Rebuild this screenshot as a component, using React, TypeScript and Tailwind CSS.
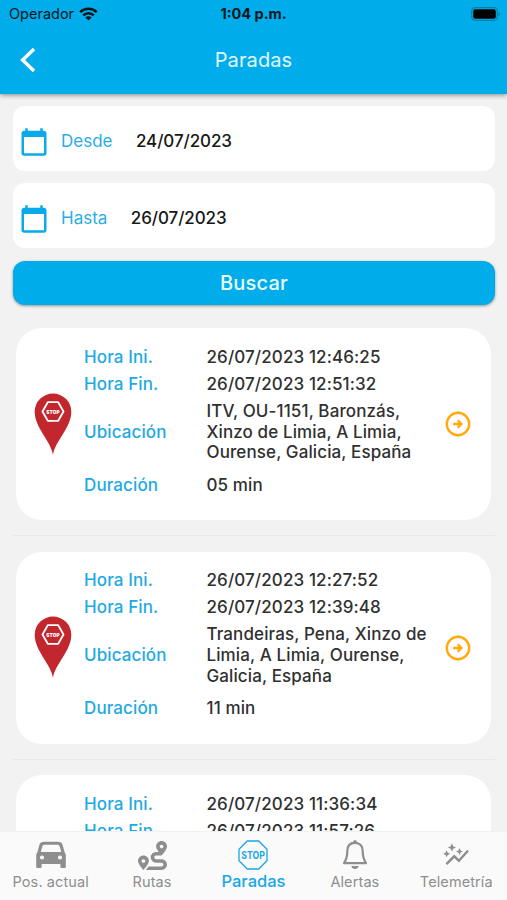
import React from 'react';
import { FaRoute } from 'react-icons/fa';
import { MdAutoGraph, MdCalendarToday } from 'react-icons/md';

interface Stop {
  start: string;
  end: string;
  location: string[];
  duration: string;
}

const stops: Stop[] = [
  {
    start: '26/07/2023 12:46:25',
    end: '26/07/2023 12:51:32',
    location: ['ITV, OU-1151, Baronzás,', 'Xinzo de Limia, A Limia,', 'Ourense, Galicia, España'],
    duration: '05 min',
  },
  {
    start: '26/07/2023 12:27:52',
    end: '26/07/2023 12:39:48',
    location: ['Trandeiras, Pena, Xinzo de', 'Limia, A Limia, Ourense,', 'Galicia, España'],
    duration: '11 min',
  },
  {
    start: '26/07/2023 11:36:34',
    end: '26/07/2023 11:57:26',
    location: [],
    duration: '',
  },
];

const WifiIcon = () => (
  <svg width="19" height="14" viewBox="0 0 19 14" fill="none" stroke="#06151c" strokeWidth="2.5">
    <path d="M1.2 5.1C5.8.6 13.2.6 17.8 5.1" />
    <path d="M4.2 8.3c3-2.9 7.6-2.9 10.6 0" />
    <path d="M9.5 13.6L6.4 10.5c1.8-1.7 4.4-1.7 6.2 0z" fill="#06151c" stroke="none" />
  </svg>
);

const BatteryIcon = () => (
  <svg width="30" height="14" viewBox="0 0 30 14">
    <rect x=".7" y=".7" width="25.6" height="12.6" rx="3.6" fill="none" stroke="#0780a9" strokeWidth="1.3" />
    <rect x="2.2" y="2.2" width="22.6" height="9.6" rx="2.2" fill="#000" />
    <path d="M27.5 4.8c2 .9 2 3.5 0 4.4z" fill="#0780a9" />
  </svg>
);

const PinIcon = () => (
  <svg width="38" height="63" viewBox="0 0 38 63">
    <path d="M19 62C17 48 .7 35 .7 18.8a18.3 18.3 0 0 1 36.6 0C37.3 35 21 48 19 62z" fill="#c1272d" />
    <path d="M13.8 9.2h10.4l5.3 9.3-5.3 9.3H13.8l-5.3-9.3z" fill="none" stroke="#fff" strokeWidth="1.8" strokeLinejoin="round" />
    <text x="19" y="20.5" textAnchor="middle" fontSize="5.4" fontWeight="900" fill="#fff" textLength="13.5" lengthAdjust="spacingAndGlyphs" className="font-[Inter]">STOP</text>
  </svg>
);

const ArrowCircleIcon = () => (
  <svg width="26" height="26" viewBox="0 0 26 26" fill="none" stroke="#ffab0f" strokeWidth="2.4">
    <circle cx="13" cy="13" r="11.2" />
    <path d="M8.2 13h7.8M12.7 9.3l3.7 3.7-3.7 3.7" />
  </svg>
);

const CarIcon = () => (
  <svg width="32" height="28" viewBox="0 0 32 28">
    <path
      fillRule="evenodd"
      fill="#8e8e8e"
      d="M9.5.8h13c3 0 4.5 1 5.2 3.4l2.1 7.6c.7.6 1 1.4 1 2.4v11.2c0 1-.7 1.7-1.7 1.7h-2c-1 0-1.700-.7-1.700-1.700v-2.500H6.600v2.500c0 1-.7 1.700-1.700 1.700h-2c-1 0-1.700-.7-1.700-1.700V14.200c0-1 .3-1.800 1-2.400l2.100-7.600C5 1.800 6.500.8 9.500.8zM10 3.700c-1.700 0-2.300.5-2.700 1.900l-1.500 5.300h20.400l-1.500-5.300c-.4-1.400-1-1.900-2.700-1.900zM7 14.400a2.100 2.100 0 1 0 0 4.200 2.100 2.100 0 0 0 0-4.200zM25 14.400a2.100 2.100 0 1 0 0 4.200 2.100 2.100 0 0 0 0-4.200z"
    />
  </svg>
);

const StopSignIcon = () => (
  <svg width="30" height="30" viewBox="0 0 30 30">
    <path d="M9.3 1h11.4L29 9.3v11.4L20.7 29H9.3L1 20.7V9.3z" fill="none" stroke="#16a8e6" strokeWidth="1.3" />
    <text x="15" y="18.9" textAnchor="middle" fontSize="10.8" fontWeight="700" fill="#16a8e6" textLength="23.5" lengthAdjust="spacingAndGlyphs" className="font-[Inter]">STOP</text>
  </svg>
);

const BellIcon = () => (
  <svg width="26" height="30" viewBox="0 0 26 30">
    <path
      d="M13 2.8c-5 0-7.7 3.3-7.7 8.3 0 5.8-.9 8.6-3.3 12.1h22c-2.4-3.5-3.3-6.3-3.3-12.1 0-5-2.7-8.3-7.7-8.3z"
      fill="none"
      stroke="#8e8e8e"
      strokeWidth="2.2"
      strokeLinejoin="round"
    />
    <path d="M11.2 3V1.5c0-1.8 3.6-1.8 3.6 0V3zM9.3 26h7.4c-.6 4-6.8 4-7.4 0z" fill="#8e8e8e" />
  </svg>
);

const DateField = ({ label, value }: { label: string; value: string }) => (
  <div className="flex h-[65px] items-center rounded-xl bg-white pl-1.5 pt-1.5">
    <MdCalendarToday size={30} color="#08aaea" />
    <span className="ml-3 pt-px text-[17px] text-[#28aee6]">{label}</span>
    <span className="ml-[23.5px] pt-px text-[17px] font-medium tracking-[-0.1px] text-[#171717]">{value}</span>
  </div>
);

const StopCard = ({ stop }: { stop: Stop }) => (
  <div className="ml-[3px] mr-1 flex h-[192px] shrink-0 rounded-[26px] bg-white pt-[15.5px] text-[17px] tracking-[0.11px]">
    <div className="w-[68px] pl-[18px] pt-[49px]">
      <PinIcon />
    </div>
    <div className="flex w-[122.5px] flex-col font-medium text-[#1daae3]">
      <span className="h-[27px] leading-[27px]">Hora Ini.</span>
      <span className="h-[27px] leading-[27px]">Hora Fin.</span>
      <span className="h-[69px] leading-[68px]">Ubicación</span>
      <span className="leading-[37px]">Duración</span>
    </div>
    <div className="flex w-[238.5px] flex-col font-medium text-[#303030]">
      <span className="h-[27px] leading-[27px]">{stop.start}</span>
      <span className="h-[27px] leading-[27px]">{stop.end}</span>
      <div className="flex h-[69px] flex-col justify-center leading-[20.7px]">
        {stop.location.map((line) => (
          <span key={line} className="whitespace-nowrap">{line}</span>
        ))}
      </div>
      <span className="leading-[37px]">{stop.duration}</span>
    </div>
    <div className="pt-[67.5px]">
      <ArrowCircleIcon />
    </div>
  </div>
);

const tabs = [
  { label: 'Pos. actual', icon: <CarIcon /> },
  { label: 'Rutas', icon: <FaRoute size={29} /> },
  { label: 'Paradas', icon: <StopSignIcon />, active: true },
  { label: 'Alertas', icon: <BellIcon /> },
  { label: 'Telemetría', icon: <MdAutoGraph size={28} /> },
];

export default function App() {
  return (
    <div className="flex h-[900px] w-[507px] flex-col overflow-hidden bg-[#f2f2f2] font-[Inter,sans-serif]">
      <header className="z-10 flex h-[94px] shrink-0 flex-col bg-[#00adea] shadow-[0_1px_5px_rgba(0,0,0,0.45)]">
        <div className="grid h-7 grid-cols-3 items-center text-[#06151c]">
          <div className="flex items-center gap-[5px] pl-[9px] text-[14.5px]">
            Operador
            <WifiIcon />
          </div>
          <span className="text-center text-[14.5px] font-bold">1:04 p.m.</span>
          <div className="flex justify-end pr-1.5">
            <BatteryIcon />
          </div>
        </div>
        <div className="grid h-[63px] grid-cols-3 items-center">
          <svg className="ml-5" width="16" height="26" viewBox="0 0 16 26" fill="none" stroke="#fff" strokeWidth="3.4">
            <path d="M14 2L2.6 13 14 24" />
          </svg>
          <h1 className="text-center text-[20px] tracking-[0.1px] text-[#e0f6fd]">Paradas</h1>
        </div>
      </header>

      <main className="flex min-h-0 flex-1 flex-col overflow-hidden pl-[13px] pr-3 pt-3">
        <div className="flex flex-col gap-3">
          <DateField label="Desde" value="24/07/2023" />
          <DateField label="Hasta" value="26/07/2023" />
          <button className="mt-px h-11 rounded-xl bg-[#00adea] text-[20px] font-medium tracking-[0.2px] text-[#e9f9fe] shadow-[0_1px_3px_rgba(0,0,0,0.4)]">
            Buscar
          </button>
        </div>
        <div className="mt-[23px] flex flex-col">
          {stops.map((stop) => (
            <React.Fragment key={stop.start}>
              <StopCard stop={stop} />
              <div className="mb-[15.5px] mt-[15px] h-px shrink-0 bg-[#e9e9e9]" />
            </React.Fragment>
          ))}
        </div>
      </main>

      <nav className="z-10 grid h-[69px] shrink-0 grid-cols-5 border-t border-[#f0f0f0] bg-[#fafafa]">
        {tabs.map((tab) => (
          <div
            key={tab.label}
            className={`flex flex-col items-center whitespace-nowrap pt-2 ${tab.active ? 'text-[16.5px] font-medium text-[#16a8e6]' : 'text-[14.5px] tracking-[0.1px] text-[#8e8e8e]'}`}
          >
            <div className="flex h-[30px] items-center">{tab.icon}</div>
            <span className={tab.active ? 'leading-[22px]' : 'leading-[24px]'}>{tab.label}</span>
          </div>
        ))}
      </nav>
    </div>
  );
}
